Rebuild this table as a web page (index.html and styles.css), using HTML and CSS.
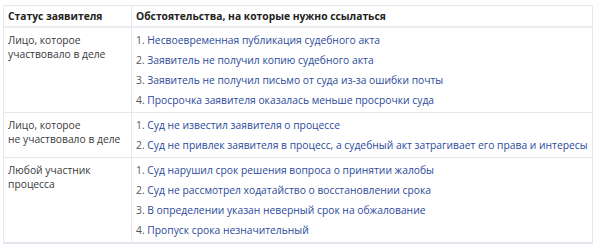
FILE: index.html
```html
<!DOCTYPE html>
<html lang="ru">
<head>
<meta charset="utf-8">
<link rel="stylesheet" href="styles.css">
</head>
<body>
<table class="tbl">
  <thead>
    <tr><th class="c1">Статус заявителя</th><th>Обстоятельства, на которые нужно ссылаться</th></tr>
  </thead>
  <tbody>
    <tr>
      <td class="c1">Лицо, которое<br>участвовало в деле</td>
      <td>
        <ol class="list">
          <li><span>Несвоевременная публикация судебного акта</span></li>
          <li><span>Заявитель не получил копию судебного акта</span></li>
          <li><span>Заявитель не получил письмо от суда из-за ошибки почты</span></li>
          <li><span>Просрочка заявителя оказалась меньше просрочки суда</span></li>
        </ol>
      </td>
    </tr>
    <tr>
      <td class="c1">Лицо, которое<br>не участвовало в деле</td>
      <td>
        <ol class="list">
          <li><span>Суд не известил заявителя о процессе</span></li>
          <li><span>Суд не привлек заявителя в процесс, а судебный акт затрагивает его права и интересы</span></li>
        </ol>
      </td>
    </tr>
    <tr>
      <td class="c1">Любой участник<br>процесса</td>
      <td>
        <ol class="list">
          <li><span>Суд нарушил срок решения вопроса о принятии жалобы</span></li>
          <li><span>Суд не рассмотрел ходатайство о восстановлении срока</span></li>
          <li><span>В определении указан неверный срок на обжалование</span></li>
          <li><span>Пропуск срока незначительный</span></li>
        </ol>
      </td>
    </tr>
  </tbody>
</table>
</body>
</html>
```

FILE: styles.css
```css
html, body {
  margin: 0;
  padding: 0;
  background: #fff;
}
body {
  padding: 5px 7px 0 3px;
  font-family: "Open Sans", "Noto Sans", sans-serif;
  font-size: 10.3px;
  color: #3a3a3a;
}
.tbl {
  width: 590px;
  border-collapse: collapse;
  border: 1px solid #e6e6ef;
  border-bottom-width: 2px;
}
.tbl th {
  text-align: left;
  font-weight: 700;
  color: #222;
  height: 20px;
  padding: 0 4px;
  border-bottom: 2px solid #ececf3;
  border-left: 1px solid #e6e6ef;
}
.tbl td {
  vertical-align: top;
  line-height: 14px;
  padding: 5px 4px 5px 4px;
  border-top: 1px solid #e6e6ef;
  border-left: 1px solid #e6e6ef;
}
.tbl .c1 {
  width: 119px;
}
.list {
  margin: 0;
  padding: 0;
  list-style: none;
  counter-reset: n;
  display: flex;
  flex-direction: column;
  gap: 6px;
}
.list li {
  counter-increment: n;
  color: #2c4a9c;
}
.list li::before {
  content: counter(n) ". ";
  color: #555;
}
```
